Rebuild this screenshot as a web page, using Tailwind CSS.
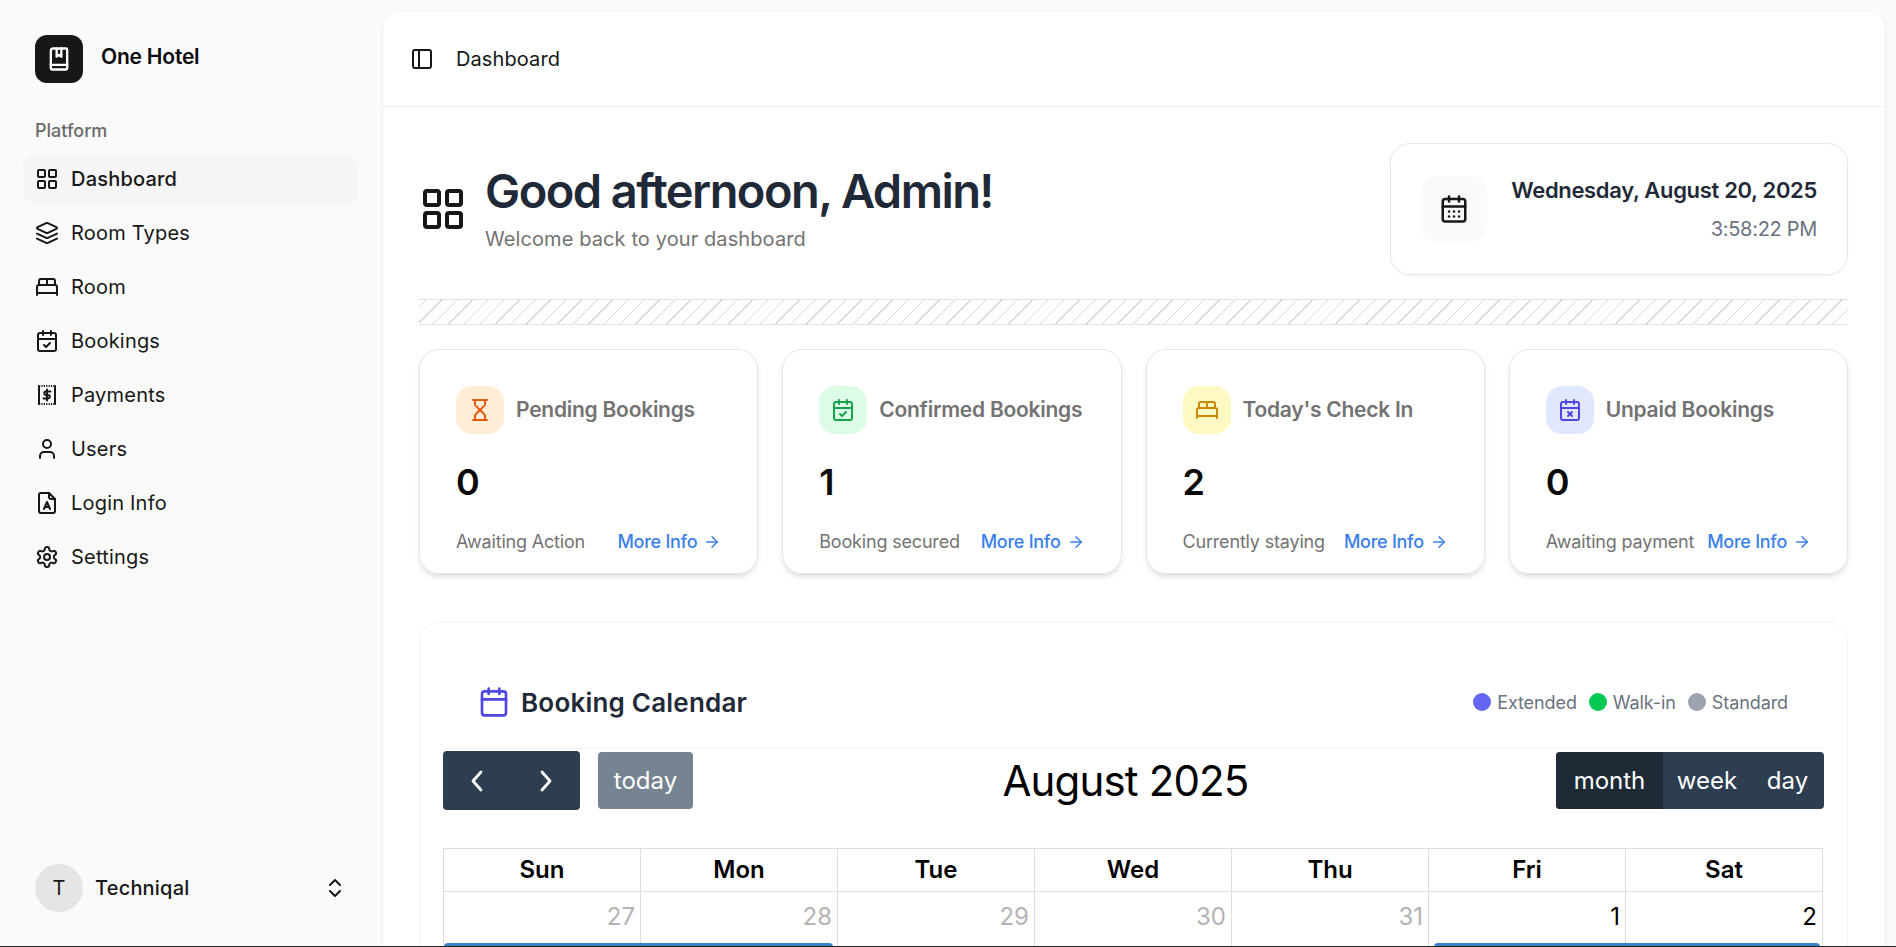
<!DOCTYPE html>
<html lang="en">

<head>
    <meta charset="UTF-8" />
    <title>One Hotel - Dashboard</title>
    <script src="https://cdn.jsdelivr.net/npm/@tailwindcss/browser@4"></script>
</head>

<body class="bg-[#fafafa] font-['Inter',sans-serif] text-[#171717] overflow-hidden">
    <div class="flex h-[947px] overflow-hidden border-b border-[#222222]">

        <!-- Sidebar -->
        <aside class="w-[383px] shrink-0 flex flex-col h-full">
            <div class="flex items-center gap-[18px] pl-[35px] pt-[35px]">
                <div class="w-12 h-12 rounded-xl bg-[#171717] flex items-center justify-center">
                    <svg class="w-7 h-7" viewBox="0 0 24 24" fill="none" stroke="white" stroke-width="2" stroke-linecap="round" stroke-linejoin="round"><path d="M10 3v7l2-1.6 2 1.6V3"/><path d="M5 20V5a2 2 0 0 1 2-2h11a1 1 0 0 1 1 1v16a1 1 0 0 1-1 1H6a1 1 0 0 1-1-1Z"/><path d="M5 17h14"/></svg>
                </div>
                <span class="text-[21px] font-semibold tracking-[-0.01em] -mt-[4px] text-[#0a0a0a]">One Hotel</span>
            </div>

            <div class="pl-[35px] mt-[36px] text-[18px] leading-6 font-medium text-[#6b6b6b]">Platform</div>

            <nav class="flex flex-col gap-[6px] mt-[12px] ml-[23px] w-[335px] text-[20px] tracking-[0.01em]">
                <a class="h-12 flex items-center gap-3 pl-[12px] rounded-xl bg-[#f5f5f5] font-medium">
                    <svg class="w-6 h-6 shrink-0" viewBox="0 0 24 24" fill="none" stroke="currentColor" stroke-width="2" stroke-linecap="round" stroke-linejoin="round"><rect x="3" y="3" width="7" height="7" rx="1"/><rect x="14" y="3" width="7" height="7" rx="1"/><rect x="14" y="14" width="7" height="7" rx="1"/><rect x="3" y="14" width="7" height="7" rx="1"/></svg>
                    Dashboard
                </a>
                <a class="h-12 flex items-center gap-3 pl-[12px] rounded-xl">
                    <svg class="w-6 h-6 shrink-0" viewBox="0 0 24 24" fill="none" stroke="currentColor" stroke-width="2" stroke-linecap="round" stroke-linejoin="round"><path d="m12.83 2.18a2 2 0 0 0-1.66 0L2.6 6.08a1 1 0 0 0 0 1.83l8.58 3.91a2 2 0 0 0 1.66 0l8.58-3.9a1 1 0 0 0 0-1.83Z"/><path d="m22 17.65-9.17 4.16a2 2 0 0 1-1.66 0L2 17.65"/><path d="m22 12.65-9.17 4.16a2 2 0 0 1-1.66 0L2 12.65"/></svg>
                    Room Types
                </a>
                <a class="h-12 flex items-center gap-3 pl-[12px] rounded-xl">
                    <svg class="w-6 h-6 shrink-0" viewBox="0 0 24 24" fill="none" stroke="currentColor" stroke-width="2" stroke-linecap="round" stroke-linejoin="round"><path d="M2 20v-8a2 2 0 0 1 2-2h16a2 2 0 0 1 2 2v8"/><path d="M4 10V6a2 2 0 0 1 2-2h12a2 2 0 0 1 2 2v4"/><path d="M12 4v6"/><path d="M2 18h20"/></svg>
                    Room
                </a>
                <a class="h-12 flex items-center gap-3 pl-[12px] rounded-xl">
                    <svg class="w-6 h-6 shrink-0" viewBox="0 0 24 24" fill="none" stroke="currentColor" stroke-width="2" stroke-linecap="round" stroke-linejoin="round"><path d="M8 2v4"/><path d="M16 2v4"/><rect x="3" y="4" width="18" height="18" rx="2"/><path d="M3 10h18"/><path d="m9 16 2 2 4-4"/></svg>
                    Bookings
                </a>
                <a class="h-12 flex items-center gap-3 pl-[12px] rounded-xl">
                    <svg class="w-6 h-6 shrink-0" viewBox="0 0 24 24" fill="none" stroke="currentColor" stroke-width="2" stroke-linecap="round"><path d="M4 3v18M20 3v18"/><path d="M4 3h16M4 21h16" stroke-dasharray="1.2 1.2" stroke-linecap="butt"/><path d="M15.5 8.5H11a1.75 1.75 0 0 0 0 3.5h2a1.75 1.75 0 0 1 0 3.5H8.5"/><path d="M12 6.5v11"/></svg>
                    Payments
                </a>
                <a class="h-12 flex items-center gap-3 pl-[12px] rounded-xl">
                    <svg class="w-6 h-6 shrink-0" viewBox="0 0 24 24" fill="none" stroke="currentColor" stroke-width="2" stroke-linecap="round" stroke-linejoin="round"><path d="M19 21v-2a4 4 0 0 0-4-4H9a4 4 0 0 0-4 4v2"/><circle cx="12" cy="7" r="4"/></svg>
                    Users
                </a>
                <a class="h-12 flex items-center gap-3 pl-[12px] rounded-xl">
                    <svg class="w-6 h-6 shrink-0" viewBox="0 0 24 24" fill="none" stroke="currentColor" stroke-width="2" stroke-linecap="round" stroke-linejoin="round"><path d="M14 2H6a2 2 0 0 0-2 2v16a2 2 0 0 0 2 2h12a2 2 0 0 0 2-2V8Z"/><path d="M14 2v4a2 2 0 0 0 2 2h4"/><path d="m9 18 3-7 3 7"/><path d="M10 16h4"/></svg>
                    Login Info
                </a>
                <a class="h-12 flex items-center gap-3 pl-[12px] rounded-xl">
                    <svg class="w-6 h-6 shrink-0" viewBox="0 0 24 24" fill="none" stroke="currentColor" stroke-width="2" stroke-linecap="round" stroke-linejoin="round"><path d="M12.22 2h-.44a2 2 0 0 0-2 2v.18a2 2 0 0 1-1 1.73l-.43.25a2 2 0 0 1-2 0l-.15-.08a2 2 0 0 0-2.73.73l-.22.38a2 2 0 0 0 .73 2.73l.15.1a2 2 0 0 1 1 1.72v.51a2 2 0 0 1-1 1.74l-.15.09a2 2 0 0 0-.73 2.73l.22.38a2 2 0 0 0 2.73.73l.15-.08a2 2 0 0 1 2 0l.43.25a2 2 0 0 1 1 1.73V20a2 2 0 0 0 2 2h.44a2 2 0 0 0 2-2v-.18a2 2 0 0 1 1-1.73l.43-.25a2 2 0 0 1 2 0l.15.08a2 2 0 0 0 2.73-.73l.22-.39a2 2 0 0 0-.73-2.73l-.15-.08a2 2 0 0 1-1-1.74v-.5a2 2 0 0 1 1-1.74l.15-.09a2 2 0 0 0 .73-2.73l-.22-.38a2 2 0 0 0-2.73-.73l-.15.08a2 2 0 0 1-2 0l-.43-.25a2 2 0 0 1-1-1.73V4a2 2 0 0 0-2-2z"/><circle cx="12" cy="12" r="3"/></svg>
                    Settings
                </a>
            </nav>

            <!-- User -->
            <div class="mt-auto mb-[34px] ml-[35px] w-[312px] flex items-center gap-3">
                <div class="w-12 h-12 rounded-full bg-[#e5e5e5] flex items-center justify-center text-[20px]">T</div>
                <span class="text-[20px] tracking-[0.01em] font-medium">Techniqal</span>
                <svg class="w-6 h-6 ml-auto" viewBox="0 0 24 24" fill="none" stroke="currentColor" stroke-width="2" stroke-linecap="round" stroke-linejoin="round"><path d="m7 15 5 5 5-5"/><path d="m7 9 5-5 5 5"/></svg>
            </div>
        </aside>

        <!-- Main -->
        <main class="w-[1502px] shrink-0 mt-3 bg-white rounded-t-2xl shadow-sm">
            <header class="h-[95px] flex items-center gap-[22px] pl-[27px] border-b border-[#f0f0f0]">
                <svg class="w-6 h-6" viewBox="0 0 24 24" fill="none" stroke="currentColor" stroke-width="2" stroke-linecap="round" stroke-linejoin="round"><rect x="3" y="3" width="18" height="18" rx="2"/><path d="M9 3v18"/></svg>
                <span class="text-[20px] tracking-[0.005em]">Dashboard</span>
            </header>

            <div class="pl-[36px] pr-[37px] pt-[36px]">
                <!-- Greeting -->
                <section class="flex items-center justify-between">
                    <div class="flex items-center gap-[18px]">
                        <svg class="w-12 h-12" viewBox="0 0 24 24" fill="none" stroke="currentColor" stroke-width="2" stroke-linecap="round" stroke-linejoin="round"><rect x="3" y="3" width="7" height="7" rx="1"/><rect x="14" y="3" width="7" height="7" rx="1"/><rect x="14" y="14" width="7" height="7" rx="1"/><rect x="3" y="14" width="7" height="7" rx="1"/></svg>
                        <div class="mb-[4px]">
                            <h1 class="text-[47px] leading-[60px] font-semibold tracking-[-0.033em] text-[#1f2937]">Good afternoon, Admin!</h1>
                            <p class="text-[20px] leading-7 mt-[4px] tracking-[0.005em] text-[#737373]">Welcome back to your dashboard</p>
                        </div>
                    </div>
                    <div class="w-[458px] h-[132px] rounded-[20px] border border-[#e5e7eb] shadow-xs flex items-center justify-between pl-[30px] pr-[30px]">
                        <div class="w-[66px] h-[66px] rounded-2xl bg-[#f9fafb] flex items-center justify-center">
                            <svg class="w-[30px] h-[30px]" viewBox="0 0 24 24" fill="none" stroke="currentColor" stroke-width="2" stroke-linecap="round" stroke-linejoin="round"><path d="M8 2v4"/><path d="M16 2v4"/><rect x="3" y="4" width="18" height="18" rx="2"/><path d="M3 10h18"/><path d="M8 14h.01"/><path d="M12 14h.01"/><path d="M16 14h.01"/><path d="M8 18h.01"/><path d="M12 18h.01"/><path d="M16 18h.01"/></svg>
                        </div>
                        <div class="text-right mb-[2px]">
                            <div class="text-[22px] leading-8 font-semibold tracking-[-0.015em] text-[#1f2937]">Wednesday, August 20, 2025</div>
                            <div class="text-[20px] leading-7 mt-[9px] tracking-[-0.015em] text-[#6b7280]">3:58:22 PM</div>
                        </div>
                    </div>
                </section>

                <!-- Stripe divider -->
                <div class="h-[26px] mt-6 border-y border-[#e2e2e2] bg-[repeating-linear-gradient(-45deg,transparent,transparent_10px,#d6d6d6_10px,#d6d6d6_11px)]"></div>

                <!-- Stat cards -->
                <section class="grid grid-cols-4 gap-6 mt-6">
                    <div class="h-[225px] rounded-[20px] border border-[#e5e5e5] shadow-md pt-[36px] px-[36px]">
                        <div class="flex items-center gap-3">
                            <div class="w-12 h-12 rounded-2xl bg-[#ffedd5] flex items-center justify-center">
                                <svg class="w-6 h-6" viewBox="0 0 24 24" fill="none" stroke="#ea580c" stroke-width="2" stroke-linecap="round" stroke-linejoin="round"><path d="M5 22h14"/><path d="M5 2h14"/><path d="M17 22v-4.172a2 2 0 0 0-.586-1.414L12 12l-4.414 4.414A2 2 0 0 0 7 17.828V22"/><path d="M7 2v4.172a2 2 0 0 0 .586 1.414L12 12l4.414-4.414A2 2 0 0 0 17 6.172V2"/></svg>
                            </div>
                            <span class="text-[21px] font-semibold tracking-[-0.012em] text-[#737373]">Pending Bookings</span>
                        </div>
                        <div class="text-[36px] leading-10 font-semibold mt-[28px] text-[#0a0a0a]">0</div>
                        <div class="flex items-center justify-between mt-[26px] text-[18px] leading-7">
                            <span class="text-[#737373] tracking-[-0.01em]">Awaiting Action</span>
                            <a class="flex items-center gap-[6px] text-[#3b80ea] font-medium tracking-[-0.015em]">More Info
                                <svg class="w-[18px] h-[18px]" viewBox="0 0 24 24" fill="none" stroke="currentColor" stroke-width="2" stroke-linecap="round" stroke-linejoin="round"><path d="M5 12h14"/><path d="m12 5 7 7-7 7"/></svg>
                            </a>
                        </div>
                    </div>

                    <div class="h-[225px] rounded-[20px] border border-[#e5e5e5] shadow-md pt-[36px] px-[36px]">
                        <div class="flex items-center gap-3">
                            <div class="w-12 h-12 rounded-2xl bg-[#dcfce7] flex items-center justify-center">
                                <svg class="w-6 h-6" viewBox="0 0 24 24" fill="none" stroke="#16a34a" stroke-width="2" stroke-linecap="round" stroke-linejoin="round"><path d="M8 2v4"/><path d="M16 2v4"/><rect x="3" y="4" width="18" height="18" rx="2"/><path d="M3 10h18"/><path d="m9 16 2 2 4-4"/></svg>
                            </div>
                            <span class="text-[21px] font-semibold tracking-[-0.012em] text-[#737373]">Confirmed Bookings</span>
                        </div>
                        <div class="text-[36px] leading-10 font-semibold mt-[28px] text-[#0a0a0a]">1</div>
                        <div class="flex items-center justify-between mt-[26px] text-[18px] leading-7">
                            <span class="text-[#737373] tracking-[-0.01em]">Booking secured</span>
                            <a class="flex items-center gap-[6px] text-[#3b80ea] font-medium tracking-[-0.015em]">More Info
                                <svg class="w-[18px] h-[18px]" viewBox="0 0 24 24" fill="none" stroke="currentColor" stroke-width="2" stroke-linecap="round" stroke-linejoin="round"><path d="M5 12h14"/><path d="m12 5 7 7-7 7"/></svg>
                            </a>
                        </div>
                    </div>

                    <div class="h-[225px] rounded-[20px] border border-[#e5e5e5] shadow-md pt-[36px] px-[36px]">
                        <div class="flex items-center gap-3">
                            <div class="w-12 h-12 rounded-2xl bg-[#fef9c3] flex items-center justify-center">
                                <svg class="w-6 h-6" viewBox="0 0 24 24" fill="none" stroke="#ca8a04" stroke-width="2" stroke-linecap="round" stroke-linejoin="round"><path d="M2 20v-8a2 2 0 0 1 2-2h16a2 2 0 0 1 2 2v8"/><path d="M4 10V6a2 2 0 0 1 2-2h12a2 2 0 0 1 2 2v4"/><path d="M12 4v6"/><path d="M2 18h20"/></svg>
                            </div>
                            <span class="text-[21px] font-semibold tracking-[-0.012em] text-[#737373]">Today's Check In</span>
                        </div>
                        <div class="text-[36px] leading-10 font-semibold mt-[28px] text-[#0a0a0a]">2</div>
                        <div class="flex items-center justify-between mt-[26px] text-[18px] leading-7">
                            <span class="text-[#737373] tracking-[-0.01em]">Currently staying</span>
                            <a class="flex items-center gap-[6px] text-[#3b80ea] font-medium tracking-[-0.015em]">More Info
                                <svg class="w-[18px] h-[18px]" viewBox="0 0 24 24" fill="none" stroke="currentColor" stroke-width="2" stroke-linecap="round" stroke-linejoin="round"><path d="M5 12h14"/><path d="m12 5 7 7-7 7"/></svg>
                            </a>
                        </div>
                    </div>

                    <div class="h-[225px] rounded-[20px] border border-[#e5e5e5] shadow-md pt-[36px] px-[36px]">
                        <div class="flex items-center gap-3">
                            <div class="w-12 h-12 rounded-2xl bg-[#e0e7ff] flex items-center justify-center">
                                <svg class="w-6 h-6" viewBox="0 0 24 24" fill="none" stroke="#4f46e5" stroke-width="2" stroke-linecap="round" stroke-linejoin="round"><path d="M8 2v4"/><path d="M16 2v4"/><rect x="3" y="4" width="18" height="18" rx="2"/><path d="M3 10h18"/><path d="m14 14-4 4"/><path d="m10 14 4 4"/></svg>
                            </div>
                            <span class="text-[21px] font-semibold tracking-[-0.012em] text-[#737373]">Unpaid Bookings</span>
                        </div>
                        <div class="text-[36px] leading-10 font-semibold mt-[28px] text-[#0a0a0a]">0</div>
                        <div class="flex items-center justify-between mt-[26px] text-[18px] leading-7">
                            <span class="text-[#737373] tracking-[-0.01em]">Awaiting payment</span>
                            <a class="flex items-center gap-[6px] text-[#3b80ea] font-medium tracking-[-0.015em]">More Info
                                <svg class="w-[18px] h-[18px]" viewBox="0 0 24 24" fill="none" stroke="currentColor" stroke-width="2" stroke-linecap="round" stroke-linejoin="round"><path d="M5 12h14"/><path d="m12 5 7 7-7 7"/></svg>
                            </a>
                        </div>
                    </div>
                </section>

                <!-- Calendar -->
                <section class="mt-12 rounded-t-[20px] border border-[#f3f4f6] px-[23px] pt-[23px] pb-10">
                    <div class="flex items-center justify-between pl-[38px] pr-[36px] pt-[40px] pb-[30px] border-b border-[#f3f4f6]">
                        <div class="flex items-center gap-[11px] h-8">
                            <svg class="w-8 h-8 -ml-[3px]" viewBox="0 0 24 24" fill="none" stroke="#4f46e5" stroke-width="2" stroke-linecap="round" stroke-linejoin="round"><path d="M8 2v4"/><path d="M16 2v4"/><rect x="3" y="4" width="18" height="18" rx="2"/><path d="M3 10h18"/></svg>
                            <h2 class="text-[26px] font-semibold tracking-[0.008em] text-[#1f2937]">Booking Calendar</h2>
                        </div>
                        <div class="flex items-center gap-3 text-[18px] tracking-[-0.005em] text-[#6b7280]">
                            <span class="flex items-center gap-[6px]"><i class="w-[18px] h-[18px] rounded-full bg-[#6366f1]"></i>Extended</span>
                            <span class="flex items-center gap-[6px]"><i class="w-[18px] h-[18px] rounded-full bg-[#00c853]"></i>Walk-in</span>
                            <span class="flex items-center gap-[6px]"><i class="w-[18px] h-[18px] rounded-full bg-[#9ca3af]"></i>Standard</span>
                        </div>
                    </div>

                    <!-- Toolbar -->
                    <div class="relative flex items-center justify-between mt-[2px] h-[59px] text-[24px] text-white">
                        <div class="flex items-center gap-[18px]">
                            <div class="flex w-[137px] h-[59px] rounded-[4px] bg-[#2c3e50]">
                                <button class="flex-1 flex items-center justify-center"><svg class="w-6 h-6" viewBox="0 0 24 24" fill="none" stroke="white" stroke-width="2.8" stroke-linecap="round" stroke-linejoin="round"><path d="M16 3 8 12l8 9"/></svg></button>
                                <button class="flex-1 flex items-center justify-center"><svg class="w-6 h-6" viewBox="0 0 24 24" fill="none" stroke="white" stroke-width="2.8" stroke-linecap="round" stroke-linejoin="round"><path d="m8 3 8 9-8 9"/></svg></button>
                            </div>
                            <button class="w-[95px] h-[57px] rounded-[4px] bg-[#768390]">today</button>
                        </div>
                        <h3 class="text-[42px] tracking-[-0.02em] text-black pl-[2px]">August 2025</h3>
                        <div class="flex h-[57px] w-[268px] rounded-[4px] bg-[#2c3e50] overflow-hidden">
                            <button class="w-[107px] bg-[#1e2b37]">month</button>
                            <button class="w-[88px]">week</button>
                            <button class="flex-1">day</button>
                        </div>
                    </div>

                    <!-- Month grid -->
                    <table class="w-[1380px] mt-[38px] table-fixed border-collapse text-[24px] text-black">
                        <thead>
                            <tr class="h-[43px] font-semibold">
                                <th class="border border-[#dddddd] font-semibold">Sun</th>
                                <th class="border border-[#dddddd] font-semibold">Mon</th>
                                <th class="border border-[#dddddd] font-semibold">Tue</th>
                                <th class="border border-[#dddddd] font-semibold">Wed</th>
                                <th class="border border-[#dddddd] font-semibold">Thu</th>
                                <th class="border border-[#dddddd] font-semibold">Fri</th>
                                <th class="border border-[#dddddd] font-semibold">Sat</th>
                            </tr>
                        </thead>
                        <tbody>
                            <tr class="h-[51px] text-right">
                                <td class="border-x border-[#dddddd] pr-[5px] text-[#b3b3b3]">27</td>
                                <td class="border-x border-[#dddddd] pr-[5px] text-[#b3b3b3]">28</td>
                                <td class="border-x border-[#dddddd] pr-[5px] text-[#b3b3b3]">29</td>
                                <td class="border-x border-[#dddddd] pr-[5px] text-[#b3b3b3]">30</td>
                                <td class="border-x border-[#dddddd] pr-[5px] text-[#b3b3b3]">31</td>
                                <td class="border-x border-[#dddddd] pr-[5px]">1</td>
                                <td class="border-x border-[#dddddd] pr-[5px]">2</td>
                            </tr>
                            <tr class="align-top">
                                <td colspan="2" class="border-x border-[#dddddd]"><div class="h-6 mr-[4px] rounded-t-[4px] bg-[#3a82cc]"></div></td>
                                <td class="border-x border-[#dddddd]"></td>
                                <td class="border-x border-[#dddddd]"></td>
                                <td class="border-x border-[#dddddd]"></td>
                                <td colspan="2" class="border-x border-[#dddddd]"><div class="h-6 ml-[5px] mr-[2px] rounded-t-[4px] bg-[#3a82cc]"></div></td>
                            </tr>
                        </tbody>
                    </table>
                </section>
            </div>
        </main>
    </div>
</body>

</html>
